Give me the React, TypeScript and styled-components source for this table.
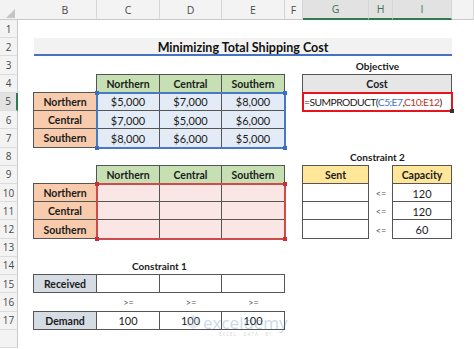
import React from 'react';
import styled, { createGlobalStyle, css } from 'styled-components';

const Global = createGlobalStyle`
  html, body { margin: 0; padding: 0; background: #ffffff; overflow: hidden; }
  #root { width: 474px; height: 349px; }
`;

const COLS = ['A', 'B', 'C', 'D', 'E', 'F', 'G', 'H', 'I', 'J'];
const ci = (l: string) => COLS.indexOf(l) + 2;

const Sheet = styled.div`
  position: relative;
  display: grid;
  grid-template-columns: 18px 16px 63px 63px 62px 63px 18px 66px 24px 59px 1fr;
  grid-template-rows: 20px repeat(18, 18.23px);
  width: 474px;
  height: 349px;
  overflow: hidden;
  font-family: Lato, 'Liberation Sans', sans-serif;
`;

const Corner = styled.div`
  grid-column: 1 / span 2;
  grid-row: 1;
  background: #f3f3f3;
  border-bottom: 1px solid #c9c9c9;
  position: relative;
`;

const CornerTri = styled.div`
  position: absolute;
  left: 6px;
  top: 9px;
  width: 0;
  height: 0;
  border-left: 9px solid transparent;
  border-bottom: 9px solid #c4c4c4;
`;

const ColHead = styled.div<{ $c: number; $sel?: boolean }>`
  grid-column: ${(p) => p.$c};
  grid-row: 1;
  display: flex;
  align-items: center;
  justify-content: center;
  background: ${(p) => (p.$sel ? '#e2e2e2' : '#f3f3f3')};
  border-right: 1px solid #d6d6d6;
  border-bottom: ${(p) => (p.$sel ? '2px solid #2e7d4c' : '1px solid #c9c9c9')};
  color: ${(p) => (p.$sel ? '#3f6f52' : '#4a4a4a')};
  font-family: 'Open Sans', 'Liberation Sans', sans-serif;
  font-size: 10.5px;
  box-sizing: border-box;
`;

const ColHeadA = styled(ColHead)`
  grid-column: 2;
`;

const RowHead = styled.div<{ $r: number; $sel?: boolean }>`
  grid-column: 1;
  grid-row: ${(p) => p.$r + 1};
  display: flex;
  align-items: center;
  justify-content: center;
  background: ${(p) => (p.$sel ? '#e2e2e2' : '#f3f3f3')};
  border-bottom: 1px solid #dcdcdc;
  border-right: ${(p) => (p.$sel ? '2px solid #2e7d4c' : '1px solid #c9c9c9')};
  color: #4a4a4a;
  font-family: 'Open Sans', 'Liberation Sans', sans-serif;
  font-size: 10px;
  box-sizing: border-box;
`;

type CellProps = {
  $c: number;
  $r: number;
  $span?: number;
  $fill?: string;
  $boxed?: boolean;
  $bold?: boolean;
  $align?: 'flex-start' | 'center';
  $size?: number;
  $ink?: string;
};

const Cell = styled.div<CellProps>`
  grid-column: ${(p) => p.$c} / span ${(p) => p.$span ?? 1};
  grid-row: ${(p) => p.$r + 1};
  display: flex;
  align-items: center;
  justify-content: ${(p) => p.$align ?? 'center'};
  font-size: ${(p) => p.$size ?? (p.$bold ? 10.5 : 11)}px;
  font-weight: ${(p) => (p.$bold ? 700 : 400)};
  color: ${(p) => p.$ink ?? '#1b1b1b'};
  background: ${(p) => p.$fill ?? 'transparent'};
  white-space: nowrap;
  box-sizing: border-box;
  padding-top: 1px;
  ${(p) =>
    p.$boxed &&
    css`
      border: 1px solid #555555;
      margin: -1px 0 0 -1px;
    `}
`;

const Title = styled.div`
  grid-column: ${ci('B')} / span 8;
  grid-row: 3;
  display: flex;
  align-items: center;
  justify-content: center;
  background: #f2f2f2;
  border-bottom: 2px solid #4472c4;
  font-size: 12.5px;
  font-weight: 700;
  color: #111;
  box-sizing: border-box;
  padding-top: 2px;
`;

const Highlight = styled.div<{ $c: number; $r: number; $cs: number; $rs: number; $color: string }>`
  grid-column: ${(p) => p.$c} / span ${(p) => p.$cs};
  grid-row: ${(p) => p.$r + 1} / span ${(p) => p.$rs};
  border: 2px solid ${(p) => p.$color};
  margin: -1px;
  position: relative;
  z-index: 3;
  pointer-events: none;
`;

const Handle = styled.span<{ $pos: 'tl' | 'tr' | 'bl' | 'br'; $color: string }>`
  position: absolute;
  width: 4px;
  height: 4px;
  background: ${(p) => p.$color};
  ${(p) => (p.$pos[0] === 't' ? 'top: -3px;' : 'bottom: -3px;')}
  ${(p) => (p.$pos[1] === 'l' ? 'left: -3px;' : 'right: -3px;')}
`;

const Formula = styled.span`
  font-size: 10.3px;
  letter-spacing: -0.55px;
  padding-left: 1px;
`;
const Ref = styled.span<{ $ink: string }>`
  color: ${(p) => p.$ink};
`;

const Watermark = styled.div`
  position: absolute;
  left: 186px;
  top: 314px;
  display: flex;
  align-items: flex-start;
  gap: 2px;
  opacity: 0.25;
  pointer-events: none;
  z-index: 4;
`;
const WmText = styled.div`
  display: flex;
  flex-direction: column;
  align-items: center;
  line-height: 1;
`;
const WmName = styled.span`
  font-family: 'Open Sans', sans-serif;
  font-size: 17px;
  color: #2f6aa8;
`;
const WmTag = styled.span`
  font-family: 'Open Sans', sans-serif;
  font-size: 4.5px;
  color: #555;
  letter-spacing: 1px;
  margin-top: 1px;
`;

const regions = ['Northern', 'Central', 'Southern'];
const costs = [
  ['$5,000', '$7,000', '$8,000'],
  ['$7,000', '$5,000', '$6,000'],
  ['$8,000', '$6,000', '$5,000'],
];
const dataCols = ['C', 'D', 'E'];

const GREEN = '#c6e0b4';
const ORANGE = '#f8cbad';
const BLUE = '#e3ebf6';
const PINK = '#fbe6e6';
const YELLOW = '#ffe699';
const SLATE = '#d6dce4';

function Corners({ color }: { color: string }) {
  return (
    <>
      <Handle $pos="tl" $color={color} />
      <Handle $pos="tr" $color={color} />
      <Handle $pos="bl" $color={color} />
      <Handle $pos="br" $color={color} />
    </>
  );
}

export default function App() {
  return (
    <>
      <Global />
      <Sheet>
        <Corner>
          <CornerTri />
        </Corner>
        {COLS.slice(1).map((l) => (
          <ColHead key={l} $c={ci(l)} $sel={l === 'G' || l === 'H' || l === 'I'}>
            {l === 'J' ? '' : l}
          </ColHead>
        ))}
        <ColHeadA $c={2}>A</ColHeadA>
        {Array.from({ length: 18 }, (_, i) => (
          <RowHead key={i} $r={i + 1} $sel={i + 1 === 5}>
            {i + 1 <= 17 ? i + 1 : ''}
          </RowHead>
        ))}

        <Title>Minimizing Total Shipping Cost</Title>

        <Cell $c={ci('G')} $r={3} $span={3} $bold $size={10}>
          Objective
        </Cell>

        {regions.map((r, i) => (
          <Cell key={'h4' + r} $c={ci(dataCols[i])} $r={4} $fill={GREEN} $boxed $bold>
            {r}
          </Cell>
        ))}
        {regions.map((r, i) => (
          <Cell key={'l' + r} $c={ci('B')} $r={5 + i} $fill={ORANGE} $boxed $bold>
            {r}
          </Cell>
        ))}
        {costs.map((row, i) =>
          row.map((v, j) => (
            <Cell key={`v${i}${j}`} $c={ci(dataCols[j])} $r={5 + i} $fill={BLUE} $boxed>
              {v}
            </Cell>
          ))
        )}
        <Highlight $c={ci('C')} $r={5} $cs={3} $rs={3} $color="#4a78c8">
          <Corners color="#3b6fc6" />
        </Highlight>

        <Cell $c={ci('G')} $r={4} $span={3} $fill="#e7e6e6" $boxed $bold>
          Cost
        </Cell>
        <Cell $c={ci('G')} $r={5} $span={3} $boxed $align="flex-start">
          <Formula>
            =SUMPRODUCT(<Ref $ink="#4472c4">C5:E7</Ref>,<Ref $ink="#c0392b">C10:E12</Ref>)
          </Formula>
        </Cell>
        <Highlight $c={ci('G')} $r={5} $cs={3} $rs={1} $color="#e8141b">
          <Handle $pos="br" $color="#333" />
        </Highlight>

        {regions.map((r, i) => (
          <Cell key={'h9' + r} $c={ci(dataCols[i])} $r={9} $fill={GREEN} $boxed $bold>
            {r}
          </Cell>
        ))}
        {regions.map((r, i) => (
          <Cell key={'l2' + r} $c={ci('B')} $r={10 + i} $fill={ORANGE} $boxed $bold>
            {r}
          </Cell>
        ))}
        {[0, 1, 2].map((i) =>
          dataCols.map((c) => <Cell key={`p${i}${c}`} $c={ci(c)} $r={10 + i} $fill={PINK} $boxed />)
        )}
        <Highlight $c={ci('C')} $r={10} $cs={3} $rs={3} $color="#d04a4a">
          <Corners color="#c9303a" />
        </Highlight>

        <Cell $c={ci('G')} $r={8} $span={3} $bold $size={10}>
          Constraint 2
        </Cell>
        <Cell $c={ci('G')} $r={9} $fill={YELLOW} $boxed $bold>
          Sent
        </Cell>
        <Cell $c={ci('I')} $r={9} $fill={YELLOW} $boxed $bold>
          Capacity
        </Cell>
        {['120', '120', '60'].map((v, i) => (
          <React.Fragment key={'c2' + i}>
            <Cell $c={ci('G')} $r={10 + i} $boxed />
            <Cell $c={ci('H')} $r={10 + i} $size={9} $ink="#555">
              {'<='}
            </Cell>
            <Cell $c={ci('I')} $r={10 + i} $boxed>
              {v}
            </Cell>
          </React.Fragment>
        ))}

        <Cell $c={ci('C')} $r={14} $span={2} $bold $size={10}>
          Constraint 1
        </Cell>
        <Cell $c={ci('B')} $r={15} $fill={SLATE} $boxed $bold>
          Received
        </Cell>
        {dataCols.map((c) => (
          <Cell key={'r' + c} $c={ci(c)} $r={15} $boxed />
        ))}
        {dataCols.map((c) => (
          <Cell key={'g' + c} $c={ci(c)} $r={16} $size={9} $ink="#555">
            {'>='}
          </Cell>
        ))}
        <Cell $c={ci('B')} $r={17} $fill={SLATE} $boxed $bold>
          Demand
        </Cell>
        {dataCols.map((c) => (
          <Cell key={'d' + c} $c={ci(c)} $r={17} $boxed>
            100
          </Cell>
        ))}

        <Watermark>
          <svg width="15" height="16" viewBox="0 0 16 17">
            <path d="M8 1 L15 5 L15 12 L8 16 L1 12 L1 5 Z" fill="#8aa6c8" />
            <rect x="5" y="6" width="2" height="6" fill="#fff" />
            <rect x="9" y="5" width="2" height="7" fill="#fff" />
          </svg>
          <WmText>
            <WmName>exceldemy</WmName>
            <WmTag>EXCEL · DATA · BI</WmTag>
          </WmText>
        </Watermark>
      </Sheet>
    </>
  );
}
